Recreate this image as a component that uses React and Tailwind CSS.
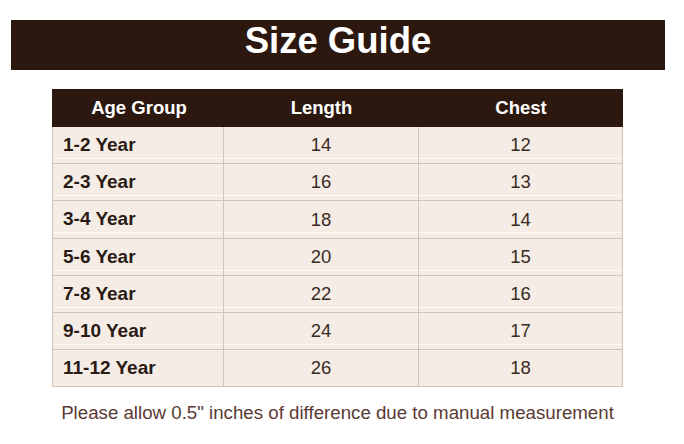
import React from "react";

const rows = [
  ["1-2 Year", "14", "12"],
  ["2-3 Year", "16", "13"],
  ["3-4 Year", "18", "14"],
  ["5-6 Year", "20", "15"],
  ["7-8 Year", "22", "16"],
  ["9-10 Year", "24", "17"],
  ["11-12 Year", "26", "18"],
];

export default function App() {
  return (
    <div
      className="w-[684px] h-[444px] bg-white overflow-hidden pt-[20px]"
      style={{ fontFamily: '"Liberation Sans", Arial, sans-serif' }}
    >
      <div className="ml-[11px] w-[654px] h-[50px] bg-[#2d1810] flex items-center justify-center pb-[8px]">
        <h1 className="text-white font-bold text-[36.5px] leading-none">Size Guide</h1>
      </div>

      <div className="ml-[52px] w-[571px] mt-[19px]">
        <div className="grid grid-cols-[172px_195px_204px] h-[38px] bg-[#2d1810] text-white font-bold text-[18.5px]">
          <div className="flex items-center justify-center pl-[2px]">Age Group</div>
          <div className="flex items-center justify-center">Length</div>
          <div className="flex items-center justify-center">Chest</div>
        </div>
        <div className="border-l border-r border-[#d4c4b6]">
          {rows.map((r, i) => (
            <div
              key={i}
              className={
                "grid grid-cols-[171px_195px_203px] border-b border-[#d4c4b6] " +
                (i === 2 ? "h-[38px] " : "h-[37px] ") +
                (i < rows.length - 1
                  ? "bg-[linear-gradient(to_bottom,#f5ede5_31px,#fdfaf7_31px,#fdfaf7_32px,#f5ede5_32px)]"
                  : "bg-[#f5ede5]")
              }
            >
              <div className="flex items-center pl-[10px] border-r border-[#d4c4b6] font-bold text-[19px] text-[#2a1a14]">
                {r[0]}
              </div>
              <div className="flex items-center justify-center border-r border-[#d4c4b6] text-[18.5px] text-[#3a2a24]">
                {r[1]}
              </div>
              <div className="flex items-center justify-center text-[18.5px] text-[#3a2a24]">
                {r[2]}
              </div>
            </div>
          ))}
        </div>
      </div>

      <p className="mt-[12px] text-center text-[18.7px] text-[#5a3a32] pr-[9px]">
        Please allow 0.5" inches of difference due to manual measurement
      </p>
    </div>
  );
}
